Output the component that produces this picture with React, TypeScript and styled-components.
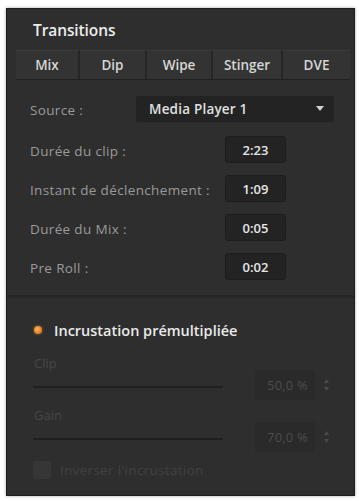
import React from "react";
import styled, { createGlobalStyle } from "styled-components";

const Global = createGlobalStyle`
  html, body { margin: 0; padding: 0; background: #ffffff; }
  body { font-family: "Open Sans", "Liberation Sans", sans-serif; }
  * { box-sizing: border-box; }
`;

const Page = styled.div`
  width: 359px;
  height: 501px;
  padding: 8px 4px 5px 6px;
`;

const Panel = styled.div`
  width: 349px;
  height: 488px;
  background: #2e2e2e;
  border: 1px solid #1c1c1c;
  box-shadow: 0 0 3px rgba(0, 0, 0, 0.35);
  display: flex;
  flex-direction: column;
`;

const Header = styled.div`
  height: 41px;
  display: flex;
  align-items: center;
  padding-left: 26px;
  color: #ececec;
  font-size: 15.5px;
  font-weight: 600;
  letter-spacing: -0.1px;
`;

const TabBar = styled.div`
  display: grid;
  grid-template-columns: 64px 67px 66px 70px 67px;
  margin: 0 4px 0 9px;
  height: 30px;
  border-bottom: 1px solid #202020;
`;

const Tab = styled.div<{ $active?: boolean }>`
  display: flex;
  align-items: center;
  justify-content: center;
  padding-bottom: 1px;
  background: ${(p) => (p.$active ? "#353535" : "#333333")};
  border-right: 2px solid #262626;
  border-top: 1px solid #3a3a3a;
  color: #d6d6d6;
  font-size: 13.5px;
  font-weight: 600;
  &:last-child { border-right: none; }
`;

const Upper = styled.div`
  height: 218px;
  padding: 16px 0 0 23px;
  display: flex;
  flex-direction: column;
  border-bottom: 3px solid #262626;
`;

const SourceRow = styled.div`
  display: flex;
  align-items: center;
  height: 26px;
  margin-bottom: 14px;
`;

const Label = styled.div<{ $w?: number }>`
  width: ${(p) => p.$w ?? 106}px;
  color: #9a9a9a;
  font-size: 13.5px;
  letter-spacing: 0.35px;
  white-space: nowrap;
  padding-top: 2px;
`;

const Select = styled.div`
  width: 198px;
  height: 26px;
  background: #232323;
  border-radius: 3px;
  display: flex;
  align-items: center;
  justify-content: space-between;
  padding: 0 10px 0 13px;
  color: #e0e0e0;
  font-size: 13.5px;
  font-weight: 600;
  letter-spacing: 0.2px;
`;

const Caret = styled.svg`
  width: 8px;
  height: 6px;
`;

const TimeRow = styled.div`
  display: flex;
  align-items: center;
  height: 27px;
  margin-bottom: 12px;
`;

const TimeBox = styled.div`
  margin-left: auto;
  margin-right: 68px;
  width: 61px;
  height: 27px;
  background: #232323;
  border: 1px solid #1d1d1d;
  border-radius: 3px;
  display: flex;
  align-items: center;
  justify-content: center;
  color: #e6e6e6;
  font-size: 13px;
  font-weight: 600;
`;

const Lower = styled.div`
  flex: 1;
  padding: 22px 0 0 25px;
  display: flex;
  flex-direction: column;
`;

const KeyRow = styled.div`
  display: flex;
  align-items: center;
  gap: 12px;
  height: 20px;
  margin-bottom: 17px;
`;

const Dot = styled.div`
  width: 8px;
  height: 8px;
  border-radius: 50%;
  margin-left: 2px;
  background: radial-gradient(circle at 40% 40%, #ffb366, #e07a1f 70%);
  box-shadow: 0 0 3px rgba(240, 140, 40, 0.6);
`;

const KeyText = styled.div`
  color: #eaeaea;
  font-size: 14.5px;
  font-weight: 600;
`;

const FaintLabel = styled.div`
  color: #464646;
  font-size: 13px;
  line-height: 13px;
  height: 13px;
  margin-left: 2px;
`;

const SliderRow = styled.div`
  display: flex;
  align-items: center;
  height: 30px;
  margin-bottom: 9px;
`;

const Track = styled.div`
  width: 190px;
  height: 2px;
  background: #202020;
  margin-top: 3px;
  margin-left: 1px;
`;

const ValueBox = styled.div`
  margin-left: 32px;
  width: 60px;
  height: 30px;
  background: #2a2a2a;
  display: flex;
  align-items: center;
  justify-content: flex-end;
  padding-right: 7px;
  color: #4c4c4c;
  font-size: 13px;
  letter-spacing: 0.2px;
`;

const Spinner = styled.svg`
  margin-left: 9px;
  width: 5px;
  height: 14px;
`;

const CheckRow = styled.div`
  display: flex;
  align-items: center;
  gap: 9px;
  margin-left: 1px;
`;

const Check = styled.div`
  width: 18px;
  height: 18px;
  border-radius: 2px;
  background: #363636;
`;

const CheckText = styled.div`
  color: #414141;
  font-size: 13.5px;
  letter-spacing: 0.3px;
`;

const times = [
  { label: "Durée du clip :", value: "2:23" },
  { label: "Instant de déclenchement :", value: "1:09" },
  { label: "Durée du Mix :", value: "0:05" },
  { label: "Pre Roll :", value: "0:02" },
];

const sliders = [
  { label: "Clip", value: "50,0 %" },
  { label: "Gain", value: "70,0 %" },
];

const tabs = ["Mix", "Dip", "Wipe", "Stinger", "DVE"];

export default function App() {
  return (
    <>
      <Global />
      <Page>
        <Panel>
          <Header>Transitions</Header>
          <TabBar>
            {tabs.map((t) => (
              <Tab key={t} $active={t === "Stinger"}>
                {t}
              </Tab>
            ))}
          </TabBar>
          <Upper>
            <SourceRow>
              <Label>Source :</Label>
              <Select>
                <span>Media Player 1</span>
                <Caret viewBox="0 0 8 6">
                  <path d="M0 0 L8 0 L4 5 Z" fill="#d0d0d0" />
                </Caret>
              </Select>
            </SourceRow>
            {times.map((r) => (
              <TimeRow key={r.label}>
                <Label $w={190}>{r.label}</Label>
                <TimeBox>{r.value}</TimeBox>
              </TimeRow>
            ))}
          </Upper>
          <Lower>
            <KeyRow>
              <Dot />
              <KeyText>Incrustation prémultipliée</KeyText>
            </KeyRow>
            {sliders.map((s) => (
              <React.Fragment key={s.label}>
                <FaintLabel>{s.label}</FaintLabel>
                <SliderRow>
                  <Track />
                  <ValueBox>{s.value}</ValueBox>
                  <Spinner viewBox="0 0 5 14">
                    <path d="M0 5 L2.5 1 L5 5 Z" fill="#4a4a4a" />
                    <path d="M0 9 L2.5 13 L5 9 Z" fill="#4a4a4a" />
                  </Spinner>
                </SliderRow>
              </React.Fragment>
            ))}
            <CheckRow>
              <Check />
              <CheckText>Inverser l'incrustation</CheckText>
            </CheckRow>
          </Lower>
        </Panel>
      </Page>
    </>
  );
}
